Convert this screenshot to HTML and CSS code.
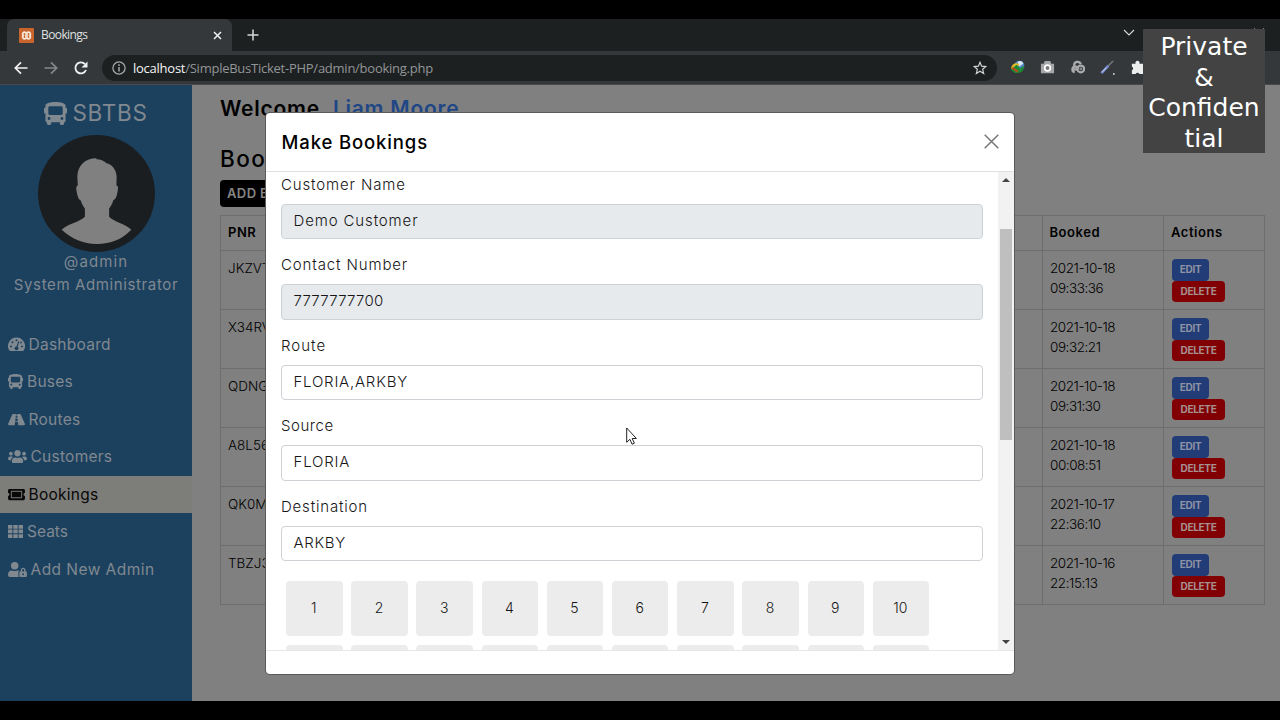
FILE: index.html
```html
<!DOCTYPE html>
<html lang="en">
<head>
<meta charset="utf-8">
<title>Bookings</title>
<link rel="stylesheet" href="styles.css">
</head>
<body>
<svg width="0" height="0" class="defs">
  <symbol id="bus" viewBox="0 0 512 512"><path d="M488 128h-8V80c0-44.800-99.200-80-224-80S32 35.200 32 80v48h-8c-13.250 0-24 10.740-24 24v80c0 13.250 10.750 24 24 24h8v160c0 17.670 14.330 32 32 32v32c0 17.670 14.330 32 32 32h32c17.670 0 32-14.330 32-32v-32h192v32c0 17.670 14.330 32 32 32h32c17.670 0 32-14.330 32-32v-32h6.400c16 0 25.600-12.800 25.600-25.600V256h8c13.250 0 24-10.750 24-24v-80c0-13.260-10.750-24-24-24zM112 400c-17.670 0-32-14.330-32-32s14.330-32 32-32 32 14.330 32 32-14.330 32-32 32zm16-112c-17.670 0-32-14.330-32-32V128c0-17.670 14.330-32 32-32h256c17.670 0 32 14.330 32 32v128c0 17.670-14.330 32-32 32H128zm272 112c-17.670 0-32-14.330-32-32s14.330-32 32-32 32 14.330 32 32-14.330 32-32 32z"/></symbol>
</svg>

<div class="screen">
  <header class="browser">
    <div class="tabstrip">
      <div class="tab">
        <svg class="favicon" viewBox="0 0 16 16"><rect width="16" height="16" rx="1" fill="#c8642c"/><path d="M8 6v4" stroke="#f3d6bd" stroke-width="3"/><path d="M7.300 6.200V5A1.700 1.700 0 1 0 4.500 8 1.700 1.700 0 1 0 7.300 11V9.800M8.700 6.200V5A1.700 1.700 0 1 1 11.500 8 1.700 1.700 0 1 1 8.700 11V9.800" fill="none" stroke="#f8e8da" stroke-width="1.900"/></svg>
        <span class="tab-title">Bookings</span>
        <svg class="tab-close" viewBox="0 0 9 9"><path d="M1 1l7 7M8 1L1 8" stroke="#f1f1f1" stroke-width="1.500"/></svg>
      </div>
      <svg class="newtab" viewBox="0 0 12 12"><path d="M6 .5v11M.5 6h11" stroke="#d5d7d8" stroke-width="1.500"/></svg>
      <div class="winctl">
        <svg width="12" height="8" viewBox="0 0 12 8"><path d="M1 1l5 5 5-5" fill="none" stroke="#d8d8d8" stroke-width="1.100"/></svg>
        <svg width="9" height="9" viewBox="0 0 9 9"><path d="M.5 8.500v-6h6v6zM2.500 2.500v-2h6v6h-2" fill="none" stroke="#d8d8d8"/></svg>
        <svg width="10" height="10" viewBox="0 0 10 10"><path d="M.5.5l9 9M9.500.5l-9 9" stroke="#d8d8d8"/></svg>
      </div>
    </div>
    <div class="toolbar">
      <svg class="nav-ico" viewBox="0 0 14 14"><path d="M13.500 7H1.500M7 1.300L1.300 7 7 12.700" fill="none" stroke="#f1f1f1" stroke-width="1.700"/></svg>
      <svg class="nav-ico" viewBox="0 0 14 14"><path d="M.5 7h12M7 1.300L12.700 7 7 12.700" fill="none" stroke="#85888a" stroke-width="1.700"/></svg>
      <svg class="nav-ico" viewBox="0 0 14 14"><path d="M12 9A5.500 5.500 0 1 1 11 3.200" fill="none" stroke="#f1f1f1" stroke-width="1.800"/><path d="M13.500.5v6h-6z" fill="#f1f1f1"/></svg>
      <div class="omnibox">
        <svg width="14" height="14" viewBox="0 0 14 14"><circle cx="7" cy="7" r="6.100" fill="none" stroke="#a5a8aa" stroke-width="1.300"/><path d="M7 6v4.500M7 3.300v1.600" stroke="#a5a8aa" stroke-width="1.500"/></svg>
        <span class="url"><b>localhost</b>/SimpleBusTicket-PHP/admin/booking.php</span>
        <svg class="star" width="14" height="14" viewBox="0 0 14 14"><path d="M7 1.300l1.650 3.900 4.200.35-3.200 2.750 1 4.100L7 10.200l-3.650 2.200 1-4.100-3.200-2.750 4.200-.35z" fill="none" stroke="#d2d4d5" stroke-width="1.200"/></svg>
      </div>
      <div class="exts">
        <svg viewBox="0 0 16 16"><circle cx="10" cy="6" r="5.300" fill="#4a86c0"/><path d="M8 2c3-2 6 0 6 2l-4 3z" fill="#dce6ee"/><path d="M1 9c1-5 6-7 9-4L6 10z" fill="#e0bb27"/><path d="M1 10c3 5 10 5 13 1l1-5-4 3-4-4z" fill="#1c8a32"/><path d="M2.500 8.500l6 4" stroke="#bd4a20" stroke-width="2.200"/></svg>
        <svg viewBox="0 0 16 16"><path d="M1 4h3l1-3h6l1 3h3v10H1z" fill="#a5a7a9"/><circle cx="8" cy="8.500" r="3" fill="#77797b" stroke="#fff" stroke-width="1.800"/></svg>
        <svg viewBox="0 0 16 16"><g fill="none" stroke="#a9abac" stroke-width="2.400"><path d="M4.500 6a3.600 3.600 0 0 1 7-1.500M8.500 9.500A3 3 0 1 0 5 13M3.500 10h4"/><circle cx="11.500" cy="9.500" r="3.600"/><circle cx="11.500" cy="9.500" r="1" stroke-width="1"/></g></svg>
        <svg viewBox="0 0 16 16"><path d="M8 7l6-6" stroke="#777b7e" stroke-width="1.500"/><path d="M1.500 14L9 6" stroke="#7187c5" stroke-width="3"/><path d="M2 13l5-5" stroke="#cdd5ee"/><path d="M14 15h1.500" stroke="#fff" stroke-width="1.500"/></svg>
        <svg viewBox="0 0 16 16"><path d="M2 4h4a2.200 2.200 0 1 1 4 0h4v4a2.200 2.200 0 1 1 0 4v3h-4a2.200 2.200 0 0 0-4 0H2v-4a2.200 2.200 0 0 0 0-4z" fill="#eceded"/></svg>
      </div>
    </div>
  </header>

  <div class="page">
    <aside class="sidebar">
      <div class="brand"><svg width="23" height="23"><use href="#bus"/></svg><span>SBTBS</span></div>
      <svg class="avatar" viewBox="0 0 116 116"><circle cx="58" cy="58" r="58" fill="#1b1e20"/><path d="M58 24c4 0 7 1 10 4 5 1 10 6 10 14l-.3 8c2 0 2 3 .8 8-.8 4-2 6-4 7-.5 3-2 5-4 8v8c6 6 15 6 22 13-10 10-20 14-34 14s-25-5-35-14c7-7 17-7 23-13v-8c-2-3-3.500-5-4-8-2-1-3-3-4-8s-.5-7 1-7l-.5-8c0-12 8-19 19-19z" fill="#808080"/></svg>
      <div class="who"><span class="w1">@admin</span><span class="w2">System Administrator</span></div>
      <nav>
        <a><svg width="17" height="15" viewBox="0 0 17 15"><path fill-rule="evenodd" d="M8.500.5a8.500 8.500 0 0 0-7.300 12.800c.2.400.6.700 1 .7h12.600c.4 0 .8-.3 1-.7A8.500 8.500 0 0 0 8.500.5z"/><g fill="#1b415f"><circle cx="3" cy="9.500" r="1"/><circle cx="4.500" cy="5.200" r="1"/><circle cx="8.500" cy="3.300" r="1"/><circle cx="14" cy="9.500" r="1"/><circle cx="13" cy="5.500" r=".9"/><circle cx="8.500" cy="11.300" r="1.900"/></g><path d="M8.500 11.300L10.800 4.500" stroke="#1b415f" stroke-width="1.100"/></svg><span class="n1">Dashboard</span></a>
        <a><svg width="15" height="15"><use href="#bus"/></svg><span class="n2">Buses</span></a>
        <a><svg width="17" height="15" viewBox="0 0 576 512"><path d="M573.190 402.670l-139.790-320C428.430 71.290 417.600 64 405.680 64h-97.590l2.450 23.160c.5 4.720-3.210 8.840-7.960 8.840h-29.160c-4.750 0-8.460-4.120-7.960-8.840L267.910 64h-97.590c-11.930 0-22.760 7.290-27.730 18.670L2.800 402.670C-6.450 423.860 8.310 448 30.540 448h196.840l10.310-97.680c.86-8.140 7.720-14.320 15.910-14.320h68.800c8.190 0 15.050 6.180 15.910 14.320L348.620 448h196.840c22.230 0 36.990-24.140 27.730-45.330zM260.400 135.160a8 8 0 0 1 7.960-7.160h39.290c4.090 0 7.530 3.090 7.960 7.160l4.600 43.580c.75 7.090-4.810 13.260-11.930 13.260h-40.540c-7.130 0-12.680-6.170-11.930-13.260zM315.640 304h-55.290c-9.500 0-16.910-8.230-15.910-17.680l5.070-48c.86-8.140 7.720-14.320 15.910-14.320h45.150c8.190 0 15.050 6.180 15.910 14.320l5.070 48c1 9.450-6.410 17.680-15.910 17.680z"/></svg><span class="n3">Routes</span></a>
        <a><svg width="19" height="15" viewBox="0 0 640 512"><path d="M96 224c35.300 0 64-28.700 64-64s-28.700-64-64-64-64 28.700-64 64 28.700 64 64 64zm448 0c35.300 0 64-28.700 64-64s-28.700-64-64-64-64 28.700-64 64 28.700 64 64 64zm32 32h-64c-17.600 0-33.500 7.100-45.100 18.600 40.300 22.100 68.900 62 75.100 109.400h66c17.700 0 32-14.300 32-32v-32c0-35.300-28.700-64-64-64zm-256 0c61.900 0 112-50.100 112-112S381.900 32 320 32 208 82.100 208 144s50.100 112 112 112zm76.800 32h-8.300c-20.800 10-43.900 16-68.500 16s-47.600-6-68.500-16h-8.300C179.600 288 128 339.600 128 403.200V432c0 26.500 21.500 48 48 48h288c26.500 0 48-21.500 48-48v-28.800c0-63.600-51.600-115.200-115.200-115.200zm-223.700-13.400C161.500 263.100 145.600 256 128 256H64c-35.300 0-64 28.700-64 64v32c0 17.700 14.300 32 32 32h65.900c6.300-47.400 34.900-87.300 75.200-109.400z"/></svg><span class="n4">Customers</span></a>
        <a class="active"><svg width="17" height="15" viewBox="0 0 576 512"><path d="M128 160h320v192H128V160zm400 96c0 26.510 21.490 48 48 48v96c0 26.510-21.490 48-48 48H48c-26.510 0-48-21.490-48-48v-96c26.510 0 48-21.490 48-48s-21.490-48-48-48v-96c0-26.510 21.490-48 48-48h480c26.510 0 48 21.490 48 48v96c-26.510 0-48 21.490-48 48zm-48-104c0-13.255-10.745-24-24-24H120c-13.255 0-24 10.745-24 24v208c0 13.255 10.745 24 24 24h336c13.255 0 24-10.745 24-24V152z"/></svg><span class="n5">Bookings</span></a>
        <a><svg width="15" height="15" viewBox="0 0 15 15"><path d="M0 1h4.400v3.700H0zM5.300 1h4.400v3.700H5.300zM10.600 1H15v3.700h-4.400zM0 5.600h4.400v3.700H0zM5.300 5.600h4.400v3.700H5.300zM10.600 5.600H15v3.700h-4.400zM0 10.200h4.400v3.700H0zM5.300 10.200h4.400v3.700H5.300zM10.600 10.200H15v3.700h-4.400z"/></svg><span class="n6">Seats</span></a>
        <a><svg width="19" height="15" viewBox="0 0 640 512"><path fill-rule="evenodd" d="M224 256a128 128 0 1 0 0-256 128 128 0 0 0 0 256zM96 288C43 298 0 350 0 410v54c0 26 22 48 48 48h320c-10-14-16-30-16-48V350c0-24 13-43 32-52-20-9-40-10-70-10-55 24-125 24-180 0zM608 320h-16v-46c0-44-36-82-80-82s-80 38-80 82v46h-16c-18 0-32 14-32 32v128c0 18 14 32 32 32h192c18 0 32-14 32-32V352c0-18-14-32-32-32zm-128 0v-46c0-42 64-42 64 0v46zm32 128a32 32 0 1 1 0-64 32 32 0 0 1 0 64z"/></svg><span class="n7">Add New Admin</span></a>
      </nav>
    </aside>

    <main>
      <h1 class="welcome">Welcome, <span>Liam Moore</span></h1>
      <h2 class="title">Bookings</h2>
      <button class="add">ADD BOOKING</button>
      <table>
        <colgroup><col class="c-pnr"><col><col class="c-booked"><col class="c-act"></colgroup>
        <tr class="head"><th>PNR</th><th></th><th>Booked</th><th>Actions</th></tr>
        <tr><td>JKZVT</td><td></td><td class="date">2021-10-18<br>09:33:36</td><td><i class="edit">EDIT</i><i class="del">DELETE</i></td></tr>
        <tr><td>X34RV</td><td></td><td class="date">2021-10-18<br>09:32:21</td><td><i class="edit">EDIT</i><i class="del">DELETE</i></td></tr>
        <tr><td>QDNG</td><td></td><td class="date">2021-10-18<br>09:31:30</td><td><i class="edit">EDIT</i><i class="del">DELETE</i></td></tr>
        <tr><td>A8L56</td><td></td><td class="date">2021-10-18<br>00:08:51</td><td><i class="edit">EDIT</i><i class="del">DELETE</i></td></tr>
        <tr><td>QK0M</td><td></td><td class="date">2021-10-17<br>22:36:10</td><td><i class="edit">EDIT</i><i class="del">DELETE</i></td></tr>
        <tr><td>TBZJ3</td><td></td><td class="date">2021-10-16<br>22:15:13</td><td><i class="edit">EDIT</i><i class="del">DELETE</i></td></tr>
      </table>
    </main>
  </div>
</div>

<section class="modal">
  <div class="modal-head"><h3>Make Bookings</h3><svg width="15" height="15" viewBox="0 0 15 15"><path d="M.7.7l13.600 13.600M14.300.7L.7 14.300" stroke="#777" stroke-width="1.500"/></svg></div>
  <div class="modal-body">
    <div class="form">
      <label class="l1">Customer Name</label><div class="input ro"><span class="v1">Demo Customer</span></div>
      <label class="l2">Contact Number</label><div class="input ro"><span class="v2">7777777700</span></div>
      <label class="l3">Route</label><div class="input"><span class="v3">FLORIA,ARKBY</span></div>
      <label class="l4">Source</label><div class="input"><span class="v4">FLORIA</span></div>
      <label class="l5">Destination</label><div class="input"><span class="v5">ARKBY</span></div>
      <div class="seats">
        <b>1</b><b>2</b><b>3</b><b>4</b><b>5</b><b>6</b><b>7</b><b>8</b><b>9</b><b>10</b>
        <b></b><b></b><b></b><b></b><b></b><b></b><b></b><b></b><b></b><b></b>
      </div>
    </div>
    <div class="scroll">
      <svg width="8" height="4" viewBox="0 0 8 4"><path d="M0 4l4-4 4 4z" fill="#444"/></svg>
      <div class="thumb"></div>
      <svg class="down" width="8" height="4" viewBox="0 0 8 4"><path d="M0 0l4 4 4-4z" fill="#444"/></svg>
    </div>
  </div>
  <div class="modal-foot"></div>
</section>

<svg class="cursor" viewBox="0 0 11 18"><path d="M.7 1v14.300l3.200-3 2.200 4.900 2.300-1-2.200-4.700h4.200z" fill="#fff" stroke="#222"/></svg>
<div class="mark">Private<br>&amp;<br>Confiden<br>tial</div>
</body>
</html>
```
FILE: styles.css
```css
* { box-sizing: border-box; }
body { margin: 0; width: 1280px; height: 720px; background: #000; position: relative; overflow: hidden; font-family: Inter, "Open Sans", sans-serif; font-size: 15px; color: #000; }
h1, h2, h3 { margin: 0; }
svg { flex: none; display: block; fill: currentColor; }
.defs { position: absolute; }
.screen { padding-top: 19px; height: 701px; display: flex; flex-direction: column; }

.browser { font-family: "Open Sans", "Noto Sans", sans-serif; flex: none; height: 66px; background: #35383b; border-bottom: 1px solid #47494c; }
.tabstrip { height: 32px; background: #1d2021; display: flex; padding-left: 7px; align-items: center; }
.tab { width: 225px; height: 32px; background: #35383b; border-radius: 7px 7px 0 0; display: flex; align-items: center; padding: 0 10px 0 12px; color: #dfe0e1; font-size: 12px; }
.favicon { width: 15px; height: 15px; margin-right: 7px; }
.tab-title { flex: 1; letter-spacing: -.6px; margin-top: -1px; }
.tab-close { width: 9px; height: 9px; }
.newtab { width: 12px; height: 12px; margin-left: 15px; }
.winctl { margin-left: auto; display: flex; width: 157px; padding-right: 16px; justify-content: space-between; align-items: center; height: 26px; margin-top: -4px; }
.winctl svg:nth-child(2) { margin-left: 44px; }
.toolbar { height: 33px; display: flex; align-items: center; padding: 0 0 0 13.500px; }
.nav-ico { width: 14px; height: 14px; margin-right: 16px; }
.omnibox { width: 895px; height: 26px; border-radius: 13px; background: #1d2021; display: flex; align-items: center; padding: 0 10px 0 9.500px; margin-left: -1.500px; }
.url { flex: 1; margin-left: 7.500px; color: #929597; font-size: 13px; letter-spacing: -.25px; white-space: nowrap; }
.url b { font-weight: 400; color: #f4f4f4; }
.exts { display: flex; gap: 15px; margin-left: 13px; }
.exts svg { width: 15px; height: 15px; }

.page { flex: 1; display: flex; min-height: 0; background: #808080; }
.sidebar { width: 192px; background: #1b415f; color: #808890; padding-top: 14px; display: flex; flex-direction: column; align-items: center; }
.brand { display: flex; align-items: center; gap: 5px; height: 28px; font-size: 22.500px; line-height: 28px; letter-spacing: .7px; }
.avatar { width: 117px; height: 117px; margin-top: 7.500px; }
.who { display: flex; flex-direction: column; align-items: center; line-height: 22.500px; margin: -.5px 0 29.500px; white-space: nowrap; }
.w1 { letter-spacing: 1.100px; }
.w2 { letter-spacing: .62px; }
nav { width: 192px; }
nav a { height: 37.500px; display: flex; align-items: center; gap: 4px; padding-left: 8px; font-size: 15.500px; letter-spacing: .25px; }
.n1, .n3, .n4, .n5 { margin-left: -.5px; }
.n6 { letter-spacing: 0; }
.n7 { letter-spacing: .45px; margin-left: -.5px; }
nav a.active { background: #7d7d7a; color: #080808; }

main { flex: 1; padding: 9px 15px 0 28px; }
.welcome { font-size: 21px; font-weight: 600; line-height: 30px; letter-spacing: .75px; white-space: nowrap; }
.welcome span { color: #204785; }
.title { font-size: 22.500px; font-weight: 450; line-height: 28px; margin-top: 21px; letter-spacing: 1.400px; }
.add { display: block; border: 0; background: #000; color: #858585; font: 600 13px/27px Inter, sans-serif; letter-spacing: .4px; height: 27px; border-radius: 4px; padding: 0 7px; margin: 7px 0 8px; }
table { width: 1045px; border-collapse: collapse; table-layout: fixed; font-size: 13.500px; line-height: 19.700px; font-weight: 300; }
.c-pnr { width: 90px; } .c-booked { width: 121.500px; } .c-act { width: 101px; }
th, td { border: 1px solid #6c6d6e; text-align: left; vertical-align: top; padding: 8px 7px 6px; }
tr { height: 59px; }
tr.head { height: 35px; }
th { font-weight: 600; font-size: 13px; vertical-align: middle; padding: 0 7px; letter-spacing: .55px; }
.date { letter-spacing: -.45px; padding-left: 7.500px; }
td i { display: block; font: 700 10px/21px Inter, sans-serif; height: 21.500px; border-radius: 4px; text-align: center; letter-spacing: -.3px; color: #8d93a5; }
td:last-child { padding: 8px 7px 6px 8px; }
.edit { width: 37px; background: #213c76; }
.del { width: 53px; background: #800003; color: #a79090; }

.modal { position: absolute; left: 266px; top: 113px; width: 748px; height: 561px; background: #fff; border-radius: 4px; box-shadow: 0 0 0 1px #5a5a5a; overflow: hidden; display: flex; flex-direction: column; }
.modal-head { height: 59px; border-bottom: 1px solid #dee0e2; display: flex; align-items: center; justify-content: space-between; padding: 0 15px 1px 15.500px; flex: none; }
.modal-head h3 { font-weight: 500; font-size: 18.500px; letter-spacing: .87px; }
.modal-body { height: 478px; display: flex; overflow: hidden; color: #161616; font-weight: 300; }
.form { flex: 1; padding: 1.500px 15px 0; }
label { display: block; line-height: 22.500px; height: 30px; width: max-content; white-space: nowrap; }
.l1, .l2, .v1 { letter-spacing: .87px; }
.l3 { letter-spacing: 1px; }
.l4 { letter-spacing: .55px; }
.l5, .v4 { letter-spacing: .82px; }
.v2 { letter-spacing: .25px; }
.v3 { letter-spacing: .78px; }
.v5 { letter-spacing: .65px; }
.input { height: 35.600px; margin-bottom: 15px; border: 1px solid #ced2d6; border-radius: 4px; line-height: 32.500px; padding-left: 11.500px; }
.ro { background: #e6eaed; }
.seats { display: grid; grid-template-columns: repeat(10, 56.500px); grid-auto-rows: 55px; gap: 9px 8.700px; padding: 4.500px 0 0 5px; }
.seats b { background: #ececec; border-radius: 4px; display: flex; align-items: center; justify-content: center; font-weight: 300; font-size: 14px; padding: 0 1px 1px 0; }
.scroll { width: 16px; background: #f2f2f2; display: flex; flex-direction: column; align-items: center; padding: 6px 0 6px; flex: none; }
.thumb { width: 12px; height: 211px; background: #bfbfbf; margin-top: 47px; }
.down { margin-top: auto; }
.modal-foot { flex: 1; border-top: 1px solid #e6e7e8; }
.cursor { position: absolute; left: 626px; top: 427px; width: 11px; height: 18px; }
.mark { position: absolute; left: 1143px; top: 29px; width: 122px; height: 124px; background: #434343; color: #fff; font: 25px/30.500px "DejaVu Sans", sans-serif; text-align: center; padding-top: 3px; }
```
